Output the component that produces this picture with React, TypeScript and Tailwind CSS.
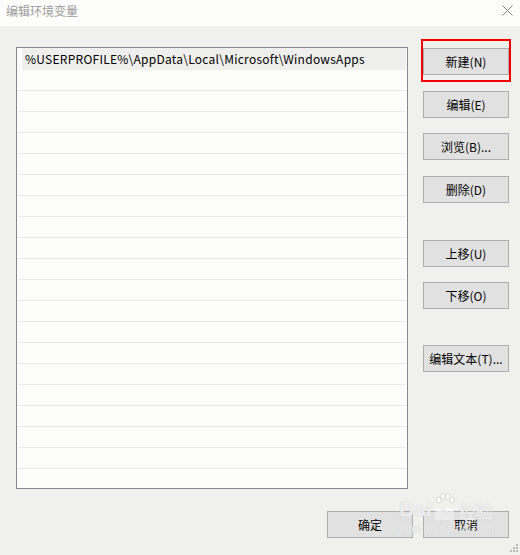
import React from "react";

const font = { fontFamily: '"Noto Sans CJK SC", "Noto Sans", sans-serif' };

/* ---------- 右侧按钮 ---------- */
const Btn = ({ label, className = "" }: { label: string; className?: string }) => (
  <div
    className={`flex h-[27px] w-[86px] items-center justify-center border border-[#adadad] bg-[#e1e1e1] text-[12px] text-black ${className}`}
  >
    {label}
  </div>
);

const sideButtons = [
  { label: "新建(N)", mt: "mt-0" },
  { label: "编辑(E)", mt: "mt-[16px]" },
  { label: "浏览(B)...", mt: "mt-[15px]" },
  { label: "删除(D)", mt: "mt-[16px]" },
  { label: "上移(U)", mt: "mt-[37px]" },
  { label: "下移(O)", mt: "mt-[15px]" },
  { label: "编辑文本(T)...", mt: "mt-[36px]" },
];

export default function App() {
  return (
    <div style={font} className="relative h-[555px] w-[520px] overflow-hidden bg-[#f0f0ec]">
      {/* 标题栏 */}
      <div className="flex h-[26px] items-start justify-between bg-[#fdfdfb] pl-[6px] pr-[7px] pt-[2px]">
        <span className="text-[12px] leading-[17px] text-[#9b9b9b]">编辑环境变量</span>
        <svg width="11" height="11" viewBox="0 0 11 11" className="mt-[3px]">
          <path d="M0.5 0.5 L10.5 10.5 M10.5 0.5 L0.5 10.5" stroke="#808080" strokeWidth="1" />
        </svg>
      </div>

      <div className="flex">
        {/* 列表 */}
        <div className="ml-[16px] mt-[21px] flex h-[442px] w-[392px] flex-col border border-[#828790] bg-[#fdfdf9]">
          <div className="ml-[5px] mr-[1px] flex h-[22px] items-center bg-[#efefed] pl-[3px] text-[12px] tracking-[0.25px] text-black">
            %USERPROFILE%\AppData\Local\Microsoft\WindowsApps
          </div>
          {Array.from({ length: 19 }).map((_, i) => (
            <div key={i} className="ml-[1px] mr-[1px] h-[21px] border-b border-[#e9e9e5]" />
          ))}
        </div>

        {/* 按钮列 */}
        <div className="ml-[15px] mt-[22px] flex flex-col">
          {sideButtons.map((b) => (
            <Btn key={b.label} label={b.label} className={b.mt} />
          ))}
        </div>
      </div>

      {/* 底部按钮 */}
      <div className="mt-[22px] flex justify-end gap-[10px] pr-[11px]">
        <Btn label="确定" className="w-[85px]" />
        <Btn label="取消" />
      </div>

      {/* 红色标注框 */}
      <div className="absolute left-[421px] top-[39px] h-[43px] w-[90px] border-2 border-[#f20000]" />

      {/* 百度经验水印 */}
      <div className="pointer-events-none absolute left-[399px] top-[493px] text-white/70 [text-shadow:0_0_1px_#c4c4c4]">
        <div className="flex items-end">
          <span className="text-[21px] font-bold leading-[22px]" style={{ fontFamily: '"Liberation Sans", sans-serif' }}>
            Bai
          </span>
          <div className="relative ml-[3px] flex flex-col items-center">
            <svg width="20" height="14" viewBox="0 0 20 14" className="mb-[1px]">
              <g fill="#ffffff" stroke="#c8c8c8" strokeWidth="0.8" opacity="0.8">
                <ellipse cx="4" cy="7" rx="2.3" ry="3" />
                <ellipse cx="8" cy="3.5" rx="2.3" ry="3" />
                <ellipse cx="13" cy="3.5" rx="2.3" ry="3" />
                <ellipse cx="17" cy="7" rx="2.3" ry="3" />
              </g>
            </svg>
            <span className="rounded-[3px] bg-white/50 px-[1px] text-[14px] font-bold leading-[12px]" style={{ fontFamily: '"Liberation Sans", sans-serif' }}>
              du
            </span>
          </div>
          <span className="ml-[4px] text-[17px] font-bold leading-[18px]">经验</span>
        </div>
        <div className="mt-[2px] text-[11px] leading-[12px] tracking-[0.4px]" style={{ fontFamily: '"Liberation Sans", sans-serif' }}>
          jingyan.baidu.com
        </div>
      </div>

      {/* 尺寸调整手柄 */}
      <svg width="10" height="10" viewBox="0 0 10 10" className="absolute bottom-[1px] right-[1px]">
        <g fill="#b9b9b6">
          <rect x="7" y="0" width="2" height="2" />
          <rect x="4" y="3" width="2" height="2" />
          <rect x="7" y="3" width="2" height="2" />
          <rect x="1" y="6" width="2" height="2" />
          <rect x="4" y="6" width="2" height="2" />
          <rect x="7" y="6" width="2" height="2" />
        </g>
      </svg>
    </div>
  );
}
